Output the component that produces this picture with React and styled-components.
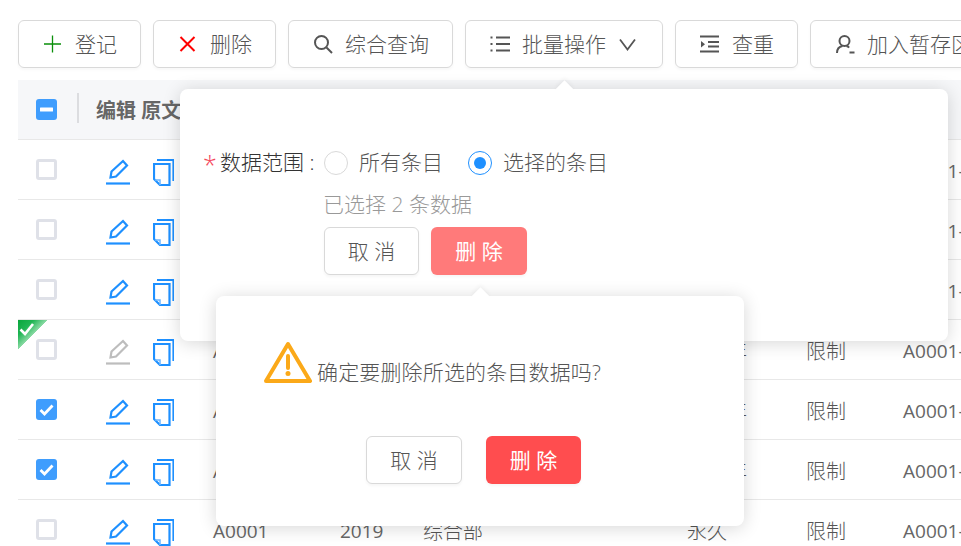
import React from "react";
import styled, { createGlobalStyle } from "styled-components";

const Global = createGlobalStyle`
html, body {
  margin: 0;
  padding: 0;
  background: #fff;
}
body {
  font-family: "Open Sans", "Noto Sans CJK SC", sans-serif;
  color: #555;
}
`;

const Page = styled.div`
  position: relative;
  width: 961px;
  height: 546px;
  overflow: hidden;
  padding: 20px 0 0 18px;
  box-sizing: border-box;
`;

const Toolbar = styled.div`
  display: flex;
  gap: 12px;
  width: 1100px;
  margin-bottom: 12px;
`;

const ToolButton = styled.div`
  display: flex;
  align-items: center;
  gap: 12px;
  flex: none;
  width: ${(p) => (p.$width ? `${p.$width}px` : "auto")};
  height: 48px;
  padding: 0 0 0 24px;
  box-sizing: border-box;
  border: 1px solid #d9d9d9;
  border-radius: 6px;
  box-shadow: 0 2px 3px rgba(0, 0, 0, 0.03);
  font-size: 21px;
  font-weight: 300;
  color: #555;
  white-space: nowrap;
  svg {
    flex: none;
  }
`;

const Caption = styled.span`
  padding-bottom: ${(p) => p.$lift || 2}px;
`;

const Table = styled.div`
  width: 943px;
`;

const Row = styled.div`
  position: relative;
  display: grid;
  grid-template-columns: 78px 117px 127px 83px 264px 119px 97px 1fr;
  align-items: center;
  height: 60px;
  box-sizing: border-box;
  border-bottom: 1px solid #e8e8e8;
  background: ${(p) => (p.$head ? "#f6f7f9" : "#fff")};
  font-size: 20px;
  font-weight: 300;
  color: #555;
  white-space: nowrap;
`;

const CheckCell = styled.div`
  padding-left: 18px;
  display: flex;
`;

const HeadCheckCell = styled(CheckCell)`
  position: relative;
  &::after {
    content: "";
    position: absolute;
    left: 59px;
    top: -6px;
    width: 2px;
    height: 30px;
    background: #dcdde0;
  }
`;

const HeadText = styled.div`
  grid-column: 2 / span 3;
  font-weight: 700;
  color: #666;
`;

const Actions = styled.div`
  display: flex;
  align-items: center;
  gap: 23px;
  padding: 5px 0 0 10px;
`;

const Cell = styled.span`
  padding-top: 2px;
`;

const Code = styled(Cell)`
  font-size: 19px;
  font-weight: 400;
  color: #666;
`;

const Check = styled.span`
  display: flex;
  align-items: center;
  justify-content: center;
  width: 21px;
  height: 21px;
  box-sizing: border-box;
  border-radius: 3px;
  border: ${(p) => (p.$on ? "none" : "3px solid #dfe1e8")};
  background: ${(p) => (p.$on ? "#3f9dfd" : "#fff")};
`;

const Corner = styled.div`
  position: absolute;
  left: 0;
  top: 0;
  width: 30px;
  height: 30px;
  background: linear-gradient(135deg, #08a63c 0%, #1fb553 26%, #8fdca8 50%, transparent 50%);
`;

const Popover = styled.div`
  position: absolute;
  left: ${(p) => p.$left}px;
  top: ${(p) => p.$top}px;
  width: ${(p) => p.$width}px;
  height: ${(p) => p.$height}px;
  box-sizing: border-box;
  padding: ${(p) => p.$pad};
  background: #fff;
  border-radius: 8px;
  box-shadow: 0 2px 18px rgba(0, 0, 0, 0.16);
  font-size: 21px;
  font-weight: 300;
  &::before {
    content: "";
    position: absolute;
    left: ${(p) => p.$arrow}px;
    top: -6px;
    width: 13px;
    height: 13px;
    background: #fff;
    transform: rotate(45deg);
    box-shadow: -2px -2px 4px rgba(0, 0, 0, 0.04);
  }
`;

const FormRow = styled.div`
  display: flex;
  align-items: center;
  height: 30px;
`;

const Star = styled.span`
  width: 16px;
  margin-left: -1px;
  margin-right: 1px;
  padding-top: 3px;
  color: #f5475b;
  font-size: 25px;
  line-height: 1;
`;

const Label = styled.span`
  width: 104px;
  padding-bottom: 4px;
  color: #333;
`;

const RadioItem = styled.label`
  display: flex;
  align-items: center;
  gap: 11px;
  margin-right: 25px;
  color: #555;
`;

const Radio = styled.span`
  display: flex;
  align-items: center;
  justify-content: center;
  width: 24px;
  height: 24px;
  box-sizing: border-box;
  border-radius: 50%;
  border: 1px solid ${(p) => (p.$on ? "#1e90ff" : "#d9d9d9")};
  &::after {
    content: "";
    width: 12px;
    height: 12px;
    border-radius: 50%;
    background: ${(p) => (p.$on ? "#1e90ff" : "transparent")};
  }
`;

const Hint = styled.div`
  margin: 11px 0 8px 119px;
  color: #999;
  line-height: 30px;
`;

const Buttons = styled.div`
  display: flex;
  gap: ${(p) => p.$gap}px;
  margin-left: ${(p) => p.$left}px;
`;

const ActionButton = styled.div`
  display: flex;
  align-items: center;
  justify-content: center;
  width: ${(p) => p.$width}px;
  height: 48px;
  padding-bottom: 2px;
  box-sizing: border-box;
  border-radius: 6px;
  border: ${(p) => (p.$bg ? "none" : "1px solid #d9d9d9")};
  background: ${(p) => p.$bg || "#fff"};
  color: ${(p) => (p.$bg ? "#fff" : "#555")};
  font-weight: ${(p) => (p.$bg ? 400 : 300)};
  box-shadow: 0 2px 3px rgba(0, 0, 0, 0.04);
  white-space: pre;
`;

const Confirm = styled.div`
  display: flex;
  align-items: flex-end;
  gap: 5px;
  height: 42px;
  margin-bottom: 53px;
  line-height: 30px;
  letter-spacing: 0.15px;
  color: #555;
`;

const ConfirmText = styled.span`
  margin-bottom: -4px;
`;

const Plus = () => (
  <svg width="20" height="18" viewBox="0 0 20 18" fill="none" stroke="#0a8f0a" strokeWidth="1.3">
    <path d="M9.500 0.500v17M1 9h17" />
  </svg>
);

const Cross = () => (
  <svg width="20" height="18" viewBox="0 0 20 18" fill="none" stroke="#f00" strokeWidth="2">
    <path d="M2.500 2l14 14M16.500 2l-14 14" />
  </svg>
);

const Search = () => (
  <svg width="20" height="20" viewBox="0 0 20 20" fill="none" stroke="#555" strokeWidth="2">
    <circle cx="8.500" cy="8.500" r="6.500" />
    <path d="M13.500 13.500L19 19" />
  </svg>
);

const ListIcon = () => (
  <svg width="20" height="18" viewBox="0 0 20 18" fill="none" stroke="#555" strokeWidth="2">
    <path d="M6 2.500h14M6 9h14M6 15.500h14" />
    <path d="M0.500 2.500h2M0.500 9h2M0.500 15.500h2" />
  </svg>
);

const Chevron = () => (
  <svg width="19" height="13" viewBox="0 0 19 13" fill="none" stroke="#555" strokeWidth="1.800">
    <path d="M2 1.500l7.500 10 7.500-10" />
  </svg>
);

const IndentIcon = () => (
  <svg width="20" height="18" viewBox="0 0 20 18" fill="none" stroke="#555" strokeWidth="2">
    <path d="M0 1.500h19M8 7h11M8 11.500h11M0 16.500h19" />
    <path d="M1 6l4 3.200-4 3.200z" fill="#555" stroke="none" />
  </svg>
);

const UserIcon = () => (
  <svg width="20" height="20" viewBox="0 0 20 20" fill="none" stroke="#555" strokeWidth="2">
    <circle cx="9.500" cy="7" r="5" />
    <path d="M2 19c0-4 2.500-6.500 5.500-7M11.500 12c1 .3 2 .8 2.600 1.600M14.500 18.500h5" />
  </svg>
);

const Minus = () => (
  <svg width="13" height="5" viewBox="0 0 13 5">
    <rect x="0" y="0.500" width="13" height="4" rx="0.500" fill="#fff" />
  </svg>
);

const Tick = () => (
  <svg width="15" height="12" viewBox="0 0 15 12" fill="none" stroke="#fff" strokeWidth="2.800">
    <path d="M1.500 6l4 4 8-8.500" />
  </svg>
);

const Pencil = ({ color }) => (
  <svg width="24" height="26" viewBox="0 0 24 26" fill="none" stroke={color} strokeWidth="2.200">
    <path d="M4.500 18.500l1-6L17 2l4 4.500L10 17.500z" />
    <path d="M0 24.500h24" />
  </svg>
);

const Copy = () => (
  <svg width="21" height="27" viewBox="0 0 21 27" fill="none" stroke="#1e90ff" strokeWidth="2.200">
    <path d="M4 1h16.500v21" />
    <path d="M1 5h15.500v21H7l-6-6z" />
    <path d="M7 26v-5H2" stroke="#6db6ff" strokeWidth="1.500" />
  </svg>
);

const Warning = () => (
  <svg width="48" height="42" viewBox="0 0 48 42" fill="none">
    <path d="M24 3L46 40H2z" stroke="#fba919" strokeWidth="4" strokeLinejoin="round" />
    <path d="M24 15v12" stroke="#fba919" strokeWidth="4" strokeLinecap="round" />
    <circle cx="24" cy="32.500" r="2.500" fill="#fba919" />
  </svg>
);

const GreenTick = () => (
  <svg width="30" height="30" viewBox="0 0 30 30" fill="none" stroke="#fff" strokeWidth="2.600">
    <path d="M2.500 9.500l4.500 4.500 8-10" />
  </svg>
);

const rows = [
  { term: "三十年" },
  { term: "三十年" },
  { term: "三十年" },
  { term: "三十年", corner: true, locked: true },
  { term: "三十年", on: true },
  { term: "三十年", on: true },
  { term: "永久" },
];

export default function App() {
  return (
    <Page>
      <Global />
      <Toolbar>
        <ToolButton $width={123}><Plus /><Caption>登记</Caption></ToolButton>
        <ToolButton $width={123}><Cross /><Caption>删除</Caption></ToolButton>
        <ToolButton $width={165}><Search /><Caption>综合查询</Caption></ToolButton>
        <ToolButton $width={198}><ListIcon /><Caption>批量操作</Caption><Chevron /></ToolButton>
        <ToolButton $width={123}><IndentIcon /><Caption>查重</Caption></ToolButton>
        <ToolButton $width={200}><UserIcon /><Caption>加入暂存区</Caption></ToolButton>
      </Toolbar>
      <Table>
        <Row $head>
          <HeadCheckCell>
            <Check $on><Minus /></Check>
          </HeadCheckCell>
          <HeadText>编辑 原文</HeadText>
        </Row>
        {rows.map((r, i) => (
          <Row key={i}>
            {r.corner && (
              <Corner>
                <GreenTick />
              </Corner>
            )}
            <CheckCell>
              <Check $on={r.on}>{r.on && <Tick />}</Check>
            </CheckCell>
            <Actions>
              <Pencil color={r.locked ? "#bdbdbd" : "#1e90ff"} />
              <Copy />
            </Actions>
            <Code>A0001</Code>
            <Code>2019</Code>
            <Cell>综合部</Cell>
            <Cell>{r.term}</Cell>
            <Cell>限制</Cell>
            <Code>A0001-</Code>
          </Row>
        ))}
      </Table>

      <Popover $left={180} $top={89} $width={768} $height={252} $arrow={378} $pad="59px 24px 0">
        <FormRow>
          <Star>*</Star>
          <Label>数据范围 :</Label>
          <RadioItem>
            <Radio />
            <Caption $lift={4}>所有条目</Caption>
          </RadioItem>
          <RadioItem>
            <Radio $on />
            <Caption $lift={4}>选择的条目</Caption>
          </RadioItem>
        </FormRow>
        <Hint>已选择 2 条数据</Hint>
        <Buttons $gap={12} $left={120}>
          <ActionButton $width={95}>取 消</ActionButton>
          <ActionButton $width={96} $bg="#ff7a7a">删 除</ActionButton>
        </Buttons>
      </Popover>

      <Popover $left={216} $top={296} $width={528} $height={230} $arrow={258} $pad="45px 48px 0">
        <Confirm>
          <Warning />
          <ConfirmText>确定要删除所选的条目数据吗?</ConfirmText>
        </Confirm>
        <Buttons $gap={24} $left={102}>
          <ActionButton $width={96}>取 消</ActionButton>
          <ActionButton $width={95} $bg="#ff4d4f">删 除</ActionButton>
        </Buttons>
      </Popover>
    </Page>
  );
}
